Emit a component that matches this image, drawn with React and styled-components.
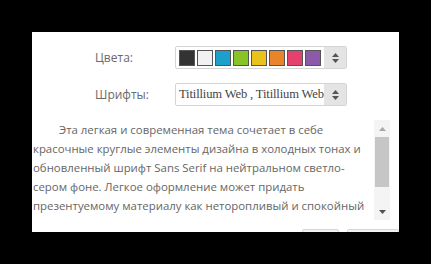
import React from 'react';
import styled, { createGlobalStyle } from 'styled-components';

const Global = createGlobalStyle`
  html, body { margin: 0; padding: 0; background: #000; }
  body { width: 431px; height: 264px; overflow: hidden; }
`;

const swatches = ['#333333', '#f2f2f2', '#1c9fcb', '#88c425', '#e9c21c', '#e8852a', '#e5416f', '#8c5aa8'];

const lines = [
  'Эта легкая и современная тема сочетает в себе',
  'красочные круглые элементы дизайна в холодных тонах и',
  'обновленный шрифт Sans Serif на нейтральном светло-',
  'сером фоне. Легкое оформление может придать',
  'презентуемому материалу как неторопливый и спокойный',
];

// dialog panel, cropped on the left and bottom
const Panel = styled.div`
  margin: 32px 0 0 32px;
  width: 367px;
  height: 200px;
  background: #fff;
  overflow: hidden;
  font-family: "Open Sans", "Noto Sans", sans-serif;
  color: #666;
`;

const FormGrid = styled.div`
  display: grid;
  grid-template-columns: 80px 172px;
  row-gap: 14px;
  align-items: center;
  padding: 14px 0 0 63px;
`;

const Label = styled.div`
  font-size: 12px;
  color: #6a6a6a;
`;

const Select = styled.div`
  display: flex;
  height: 23px;
  box-sizing: border-box;
  border: 1px solid #d4d4d4;
  border-radius: 2px;
  background: #fff;
  overflow: hidden;
`;

const SelectValue = styled.div`
  flex: 1;
  display: flex;
  align-items: center;
  gap: 2px;
  padding-left: 3px;
  font-family: ${p => (p.serif ? '"Liberation Serif", serif' : 'inherit')};
  font-size: 12.6px;
  letter-spacing: ${p => (p.serif ? '-0.15px' : '0')};
  color: #444;
  white-space: nowrap;
  overflow: hidden;
`;

const Swatch = styled.span`
  width: 14px;
  height: 14px;
  border: 1px solid #555;
  background: ${p => p.color};
`;

const Spinner = styled.div`
  width: 22px;
  background: #e4e4e4;
  display: flex;
  align-items: center;
  justify-content: center;
`;

const TextRow = styled.div`
  display: flex;
  margin-top: 14px;
  height: 100px;
`;

const Text = styled.div`
  width: 340px;
  padding-left: 1px;
  font-size: 11.4px;
  line-height: 19px;
  color: #666;
  white-space: nowrap;
  overflow: hidden;
`;

const Line = styled.div`
  padding-left: ${p => (p.first ? 26 : 0)}px;
`;

const Scrollbar = styled.div`
  width: 16px;
  margin-left: 1px;
  background: #f4f4f4;
  display: flex;
  flex-direction: column;
  align-items: center;
`;

const ScrollArrow = styled.div`
  height: 17px;
  display: flex;
  align-items: center;
  justify-content: center;
`;

const Thumb = styled.div`
  width: 14px;
  height: 50px;
  background: #c6c6c6;
`;

const Spacer = styled.div`
  flex: 1;
`;

const Footer = styled.div`
  display: flex;
  justify-content: flex-end;
  gap: 8px;
  margin-top: 9px;
`;

const Button = styled.div`
  width: ${p => p.w}px;
  height: 12px;
  background: #f2f2f2;
  border: 1px solid #d6d6d6;
  border-radius: 2px;
`;

const SpinIcon = () => (
  <svg width="9" height="12" viewBox="0 0 9 12">
    <path d="M4.5 1 L8 5 H1 Z" fill="#555" />
    <path d="M4.5 11 L8 7 H1 Z" fill="#555" />
  </svg>
);

export default function App() {
  return (
    <>
      <Global />
      <Panel>
        <FormGrid>
          <Label>Цвета:</Label>
          <Select>
            <SelectValue>
              {swatches.map(c => <Swatch key={c} color={c} />)}
            </SelectValue>
            <Spinner><SpinIcon /></Spinner>
          </Select>
          <Label>Шрифты:</Label>
          <Select>
            <SelectValue serif>Titillium Web , Titillium Web</SelectValue>
            <Spinner><SpinIcon /></Spinner>
          </Select>
        </FormGrid>
        <TextRow>
          <Text>
            {lines.map((l, i) => <Line key={i} first={i === 0}>{l}</Line>)}
          </Text>
          <Scrollbar>
            <ScrollArrow>
              <svg width="7" height="4" viewBox="0 0 7 4"><path d="M3.5 0 L7 4 H0 Z" fill="#a8a8a8" /></svg>
            </ScrollArrow>
            <Thumb />
            <Spacer />
            <ScrollArrow>
              <svg width="7" height="4" viewBox="0 0 7 4"><path d="M0 0 H7 L3.5 4 Z" fill="#505050" /></svg>
            </ScrollArrow>
          </Scrollbar>
        </TextRow>
        <Footer>
          <Button w={35} />
          <Button w={50} />
        </Footer>
      </Panel>
    </>
  );
}
